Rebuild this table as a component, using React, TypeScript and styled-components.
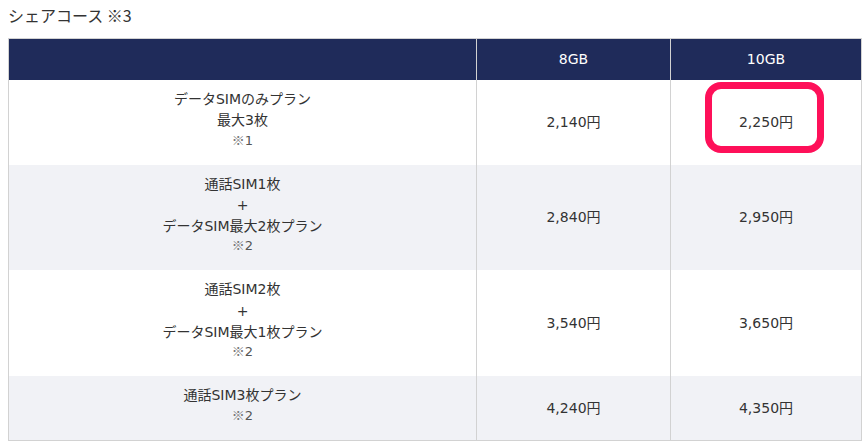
import React from "react";
import styled, { createGlobalStyle } from "styled-components";

const Global = createGlobalStyle`
  html, body { margin: 0; padding: 0; background: #ffffff; }
  body {
    padding: 0 8px;
    font-family: "DejaVu Sans", "Noto Sans CJK JP", sans-serif;
    color: #333333;
  }
`;

const Title = styled.h2`
  margin: 0 0 8px;
  font-size: 16px;
  font-weight: normal;
  line-height: 30px;
  color: #333333;
  font-family: "Noto Sans CJK JP", sans-serif;
`;

const Table = styled.table`
  width: 854px;
  border-collapse: collapse;
  table-layout: fixed;
  border: 1px solid #d2d2d2;
  font-size: 14px;
`;

const HeadCell = styled.th<{ $w?: number }>`
  width: ${(p) => (p.$w ? `${p.$w}px` : "auto")};
  background: #1f2b5a;
  color: #ffffff;
  font-weight: normal;
  line-height: 21px;
  padding: 10px 0 10px;
  text-align: center;
  border-left: 1px solid #d2d2d2;
  &:first-child { border-left: none; }
`;

const Row = styled.tr<{ $alt?: boolean }>`
  background: ${(p) => (p.$alt ? "#f1f2f6" : "#ffffff")};
`;

const PlanCell = styled.td`
  text-align: center;
  vertical-align: top;
  padding: 9px 0 18px;
  line-height: 21.3px;
  color: #333333;
`;

const Line = styled.div``;

const Note = styled.div`
  height: 15px;
  font-size: 13px;
  line-height: 15px;
  color: #555555;
  overflow: visible;
`;

const Mark = styled.span`
  font-family: "Noto Sans CJK JP", sans-serif;
  color: #777777;
`;

const PriceCell = styled.td`
  position: relative;
  text-align: center;
  vertical-align: middle;
  border-left: 1px solid #d2d2d2;
  color: #333333;
  line-height: 21px;
`;

const Highlight = styled.span`
  position: absolute;
  left: 34px;
  top: 2px;
  width: 119px;
  height: 71px;
  box-sizing: border-box;
  border: 7px solid #fe1059;
  border-radius: 16px;
  pointer-events: none;
`;

type Plan = {
  lines: string[];
  note: string;
  p8: string;
  p10: string;
  mark?: boolean;
};

const plans: Plan[] = [
  { lines: ["データSIMのみプラン", "最大3枚"], note: "1", p8: "2,140円", p10: "2,250円", mark: true },
  { lines: ["通話SIM1枚", "+", "データSIM最大2枚プラン"], note: "2", p8: "2,840円", p10: "2,950円" },
  { lines: ["通話SIM2枚", "+", "データSIM最大1枚プラン"], note: "2", p8: "3,540円", p10: "3,650円" },
  { lines: ["通話SIM3枚プラン"], note: "2", p8: "4,240円", p10: "4,350円" },
];

export default function App() {
  return (
    <>
      <Global />
      <Title>シェアコース ※3</Title>
      <Table>
        <thead>
          <tr>
            <HeadCell $w={467}></HeadCell>
            <HeadCell $w={193}>8GB</HeadCell>
            <HeadCell>10GB</HeadCell>
          </tr>
        </thead>
        <tbody>
          {plans.map((p, i) => (
            <Row key={i} $alt={i % 2 === 1}>
              <PlanCell>
                {p.lines.map((l, j) => (
                  <Line key={j}>{l}</Line>
                ))}
                <Note>
                  <Mark>※</Mark>
                  {p.note}
                </Note>
              </PlanCell>
              <PriceCell>{p.p8}</PriceCell>
              <PriceCell>
                {p.p10}
                {p.mark && <Highlight />}
              </PriceCell>
            </Row>
          ))}
        </tbody>
      </Table>
    </>
  );
}
